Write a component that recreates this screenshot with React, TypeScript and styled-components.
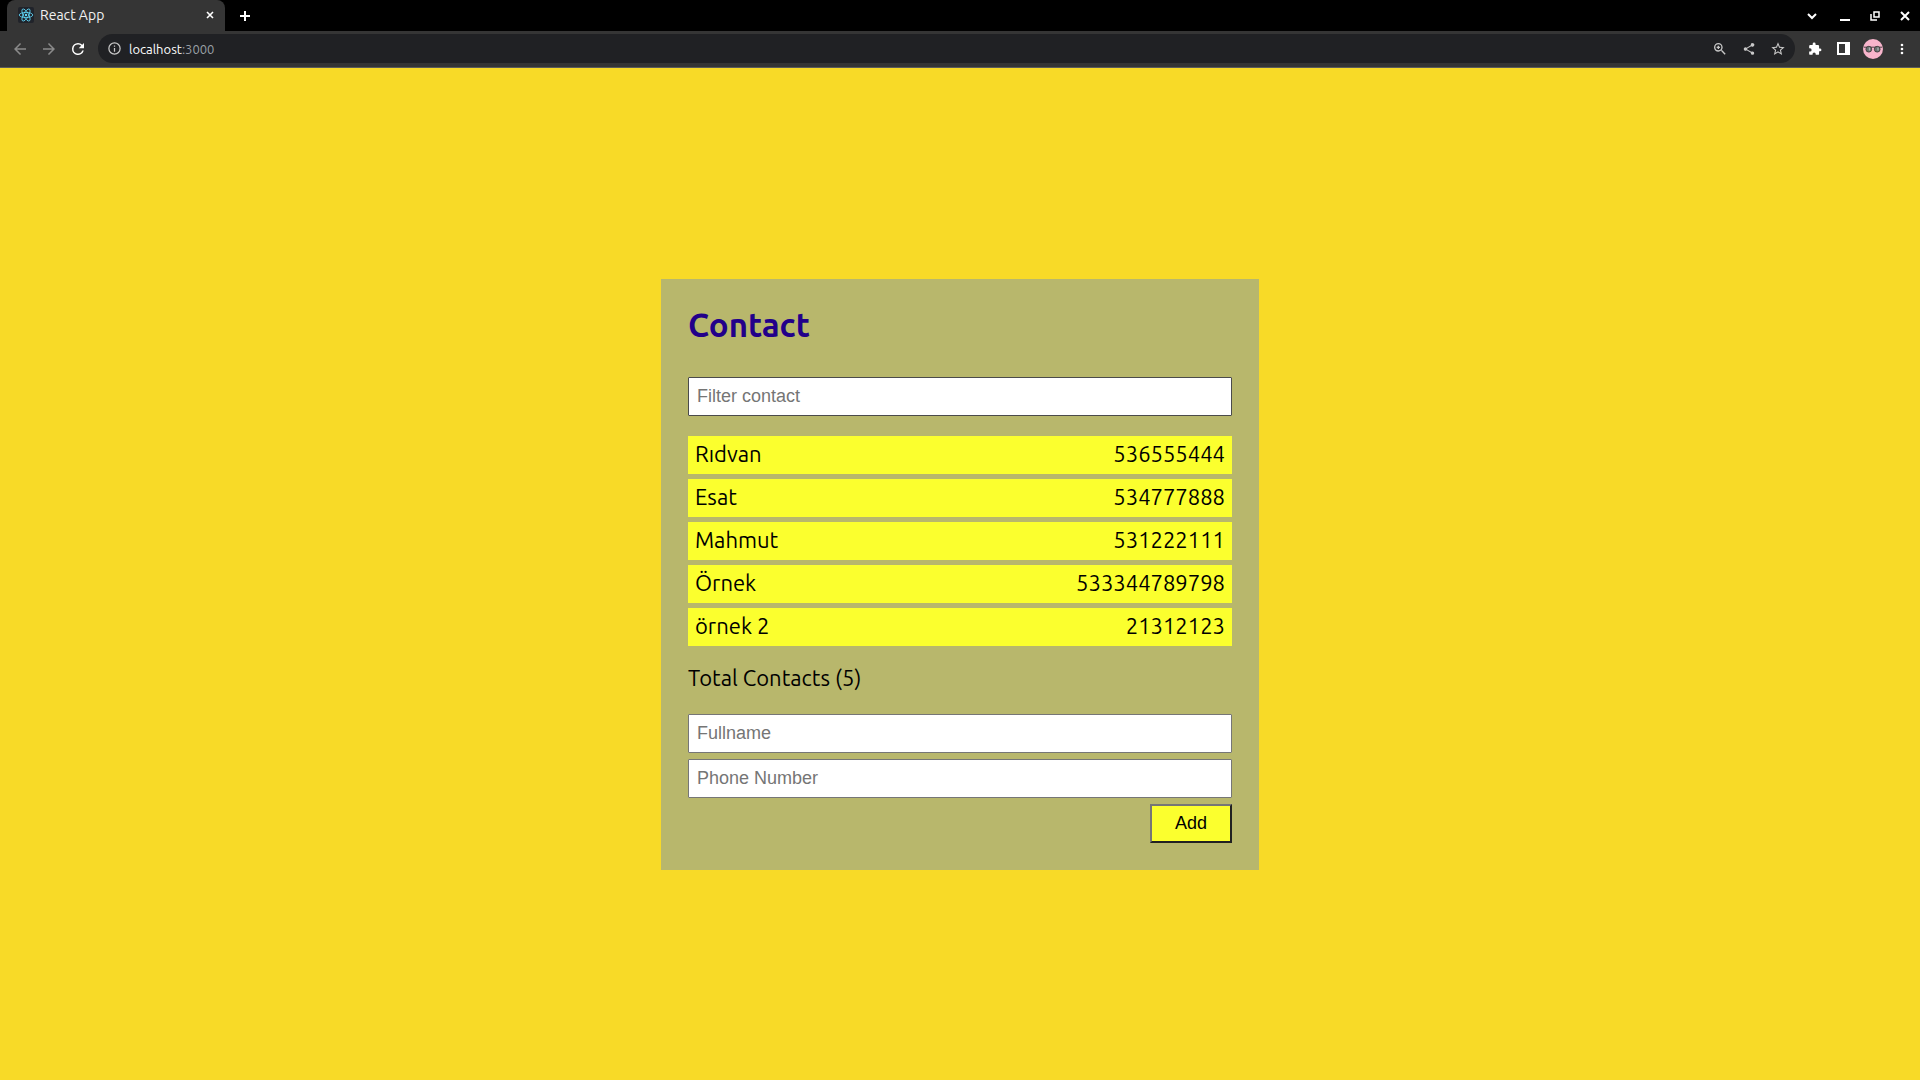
import React, { useState } from "react";
import styled, { createGlobalStyle } from "styled-components";

const uiFont = `Ubuntu, "Noto Sans", sans-serif`;
const controlFont = `"Liberation Sans", Arial, sans-serif`;

const GlobalStyle = createGlobalStyle`
  *, *::before, *::after { box-sizing: border-box; }
  body { margin: 0; background: #f8da27; font-family: ${uiFont}; }
`;

const Page = styled.div`
  min-height: 100vh;
  display: flex;
  flex-direction: column;
`;

const Chrome = styled.header`
  background: #353535;
  border-bottom: 1px solid #5c5c5a;
`;

const TabStrip = styled.div`
  display: flex;
  align-items: center;
  height: 31px;
  background: #000;
`;

const Tab = styled.div`
  display: flex;
  align-items: center;
  gap: 6px;
  width: 218px;
  height: 31px;
  margin-left: 7px;
  padding: 0 7px 1px 11px;
  border-radius: 8px 8px 0 0;
  background: #353535;
  color: #f1f1f1;
  font-size: 14px;
  line-height: 16px;
`;

const TabTitle = styled.span`
  flex: 1;
`;

const IconButton = styled.button<{ $size?: number }>`
  display: flex;
  align-items: center;
  justify-content: center;
  flex: none;
  width: ${(p) => p.$size ?? 29}px;
  height: ${(p) => p.$size ?? 29}px;
  padding: 0;
  border: 0;
  background: none;
  color: #fff;
  &:disabled { color: #8a8a8a; }
`;

const NewTab = styled(IconButton)`
  margin-left: 5px;
`;

const WindowControls = styled.div`
  display: flex;
  align-items: center;
  margin-left: auto;
`;

const Toolbar = styled.div`
  display: flex;
  align-items: center;
  height: 36px;
  padding: 0 4px 1px 5px;
`;

const AddressBar = styled.div`
  display: flex;
  align-items: center;
  flex: 1;
  height: 29px;
  margin: 0 5px 0 6px;
  padding: 0 3px 0 2px;
  border-radius: 15px;
  background: #202124;
  color: #bdc1c6;
`;

const Address = styled.a`
  flex: 1;
  color: #9aa0a6;
  font-size: 13px;
  line-height: 16px;
  text-decoration: none;
`;

const Host = styled.span`
  color: #fff;
`;

const AddressButton = styled(IconButton)`
  color: #c8c8c8;
`;

const Main = styled.main`
  flex: 1;
  display: flex;
  align-items: center;
  justify-content: center;
`;

const Card = styled.section`
  width: 598px;
  max-width: 100%;
  padding: 27px;
  background: #b8b76c;
  color: #000;
  font-size: 22px;
  line-height: 24px;
`;

const Title = styled.h1`
  margin: 0 0 34px;
  color: #22008a;
  font-size: 33px;
  font-weight: 700;
  line-height: 37px;
`;

const TextBox = styled.input<{ $dark?: boolean }>`
  display: block;
  width: 100%;
  height: 39px;
  padding: 0 8px;
  border: 1px solid ${(p) => (p.$dark ? "#4b4b4b" : "#767676")};
  border-radius: 1px;
  background: #fff;
  color: #000;
  font-family: ${controlFont};
  font-size: 18px;
  &::placeholder { color: #757575; opacity: 1; }
`;

const List = styled.ul`
  display: flex;
  flex-direction: column;
  gap: 5px;
  margin: 20px 0;
  padding: 0;
  list-style: none;
`;

const ListItem = styled.li`
  display: flex;
  justify-content: space-between;
  padding: 6px 7px 8px;
  background: #fbff2e;
`;

const Total = styled.p`
  margin: 0 0 24px;
`;

const Form = styled.form`
  display: flex;
  flex-direction: column;
  gap: 6px;
`;

const AddButton = styled.button`
  align-self: flex-end;
  width: 82px;
  height: 39px;
  padding: 0;
  border: 2px solid;
  border-color: #767676 #212121 #212121 #767676;
  background: #fbff2e;
  color: #000;
  font-family: ${controlFont};
  font-size: 18px;
`;

const Icon = ({ d, size = 18, box = 24 }: { d: string; size?: number; box?: number }) => (
  <svg width={size} height={size} viewBox={`0 0 ${box} ${box}`} fill="currentColor" aria-hidden="true">
    <path d={d} />
  </svg>
);

const Stroke = ({ d, size, width = 2 }: { d: string; size: number; width?: number }) => (
  <svg width={size} height={size} viewBox={`0 0 ${size} ${size}`} fill="none" stroke="currentColor" strokeWidth={width} aria-hidden="true">
    <path d={d} />
  </svg>
);

const ReactLogo = () => (
  <svg width="16" height="16" viewBox="0 0 16 16" aria-hidden="true">
    <rect width="16" height="16" rx="2" fill="#20232a" />
    <g fill="none" stroke="#61dafb" strokeWidth="0.8">
      <ellipse cx="8" cy="8" rx="6.8" ry="2.6" />
      <ellipse cx="8" cy="8" rx="6.8" ry="2.6" transform="rotate(60 8 8)" />
      <ellipse cx="8" cy="8" rx="6.8" ry="2.6" transform="rotate(120 8 8)" />
    </g>
    <circle cx="8" cy="8" r="1.2" fill="#61dafb" />
  </svg>
);

const Avatar = () => (
  <svg width="20" height="20" viewBox="0 0 20 20" aria-hidden="true">
    <circle cx="10" cy="10" r="10" fill="#f7b4cb" />
    <path d="M1 8.2h18" stroke="#4a4244" strokeWidth="1" />
    <circle cx="5.800" cy="10.200" r="2.900" fill="#68706f" stroke="#3b3436" strokeWidth="0.8" />
    <circle cx="14.200" cy="10.200" r="2.900" fill="#68706f" stroke="#3b3436" strokeWidth="0.8" />
    <path d="M6.500 8.500v3M15 8.500v3" stroke="#aab3b3" strokeWidth="1.300" />
  </svg>
);

const icons = {
  back: "M20 11H7.83l5.59-5.59L12 4l-8 8 8 8 1.41-1.41L7.83 13H20v-2z",
  forward: "M12 4l-1.41 1.41L16.17 11H4v2h12.17l-5.58 5.59L12 20l8-8z",
  reload: "M17.65 6.35A7.96 7.96 0 0 0 12 4a8 8 0 1 0 7.73 10h-2.08A6 6 0 1 1 12 6c1.66 0 3.14.69 4.22 1.78L13 11h7V4l-2.35 2.35z",
  info: "M11 7h2v2h-2zm0 4h2v6h-2zm1-9a10 10 0 1 0 0 20 10 10 0 0 0 0-20zm0 18a8 8 0 1 1 0-16 8 8 0 0 1 0 16z",
  zoom: "M15.5 14h-.79l-.28-.27A6.47 6.47 0 0 0 16 9.5 6.5 6.5 0 1 0 9.5 16c1.61 0 3.09-.59 4.23-1.57l.27.28v.79l5 4.99L20.49 19l-4.99-5zm-6 0a4.5 4.5 0 1 1 0-9 4.5 4.5 0 0 1 0 9zM10.500 7h-2v1.500H7v2h1.500V12h2v-1.500H12v-2h-1.500z",
  share: "M18 16.08c-.76 0-1.44.3-1.96.77L8.910 12.700c.05-.23.09-.46.09-.7s-.04-.47-.09-.7l7.050-4.110A3 3 0 1 0 15 5c0 .24.04.47.09.7L8.040 9.810a3 3 0 1 0 0 4.380l7.120 4.160A2.920 2.920 0 1 0 18 16.080z",
  star: "M22 9.240l-7.190-.62L12 2 9.190 8.630 2 9.240l5.460 4.730L5.820 21 12 17.270 18.180 21l-1.630-7.030L22 9.240zM12 15.400l-3.760 2.270 1-4.280-3.320-2.880 4.380-.38L12 6.100l1.710 4.040 4.380.38-3.320 2.880 1 4.280L12 15.400z",
  puzzle: "M20.500 11H19V7a2 2 0 0 0-2-2h-4V3.500a2.500 2.500 0 0 0-5 0V5H4a2 2 0 0 0-1.990 2v3.800H3.500a2.700 2.700 0 0 1 0 5.400H2V20a2 2 0 0 0 2 2h3.800v-1.500a2.700 2.700 0 0 1 5.400 0V22H17a2 2 0 0 0 2-2v-4h1.500a2.500 2.500 0 0 0 0-5z",
  more: "M12 8a2 2 0 1 0 0-4 2 2 0 0 0 0 4zm0 2a2 2 0 1 0 0 4 2 2 0 0 0 0-4zm0 6a2 2 0 1 0 0 4 2 2 0 0 0 0-4z",
};

const initialContacts = [
  { name: "Rıdvan", phone: "536555444" },
  { name: "Esat", phone: "534777888" },
  { name: "Mahmut", phone: "531222111" },
  { name: "Örnek", phone: "533344789798" },
  { name: "örnek 2", phone: "21312123" },
];

function BrowserChrome() {
  return (
    <Chrome>
      <TabStrip>
        <Tab>
          <ReactLogo />
          <TabTitle>React App</TabTitle>
          <IconButton $size={16} aria-label="Close tab"><Stroke size={8} width={1.6} d="M1 1l6 6M7 1l-6 6" /></IconButton>
        </Tab>
        <NewTab aria-label="New tab"><Stroke size={12} d="M6 1v10M1 6h10" /></NewTab>
        <WindowControls>
          <IconButton $size={36} aria-label="Search tabs"><Stroke size={10} d="M1 3l4 4 4-4" /></IconButton>
          <IconButton $size={30} aria-label="Minimize"><Stroke size={10} d="M0 9h10" /></IconButton>
          <IconButton $size={30} aria-label="Restore"><Stroke size={10} width={1.5} d="M4 1h5v5H4zM1 3v6h6" /></IconButton>
          <IconButton $size={30} aria-label="Close"><Stroke size={10} d="M1 1l8 8M9 1l-8 8" /></IconButton>
        </WindowControls>
      </TabStrip>
      <Toolbar>
        <IconButton disabled aria-label="Back"><Icon d={icons.back} /></IconButton>
        <IconButton disabled aria-label="Forward"><Icon d={icons.forward} /></IconButton>
        <IconButton aria-label="Reload"><Icon d={icons.reload} /></IconButton>
        <AddressBar>
          <AddressButton aria-label="Site information"><Icon size={15} d={icons.info} /></AddressButton>
          <Address href="#"><Host>localhost</Host>:3000</Address>
          <AddressButton aria-label="Zoom"><Icon size={16} d={icons.zoom} /></AddressButton>
          <AddressButton aria-label="Share"><Icon size={14} d={icons.share} /></AddressButton>
          <AddressButton aria-label="Bookmark"><Icon size={16} d={icons.star} /></AddressButton>
        </AddressBar>
        <IconButton aria-label="Extensions"><Icon size={14} d={icons.puzzle} /></IconButton>
        <IconButton aria-label="Side panel">
          <svg width="13" height="13" viewBox="0 0 13 13" fill="currentColor" aria-hidden="true">
            <path fillRule="evenodd" d="M0 0h13v13H0zM2 2v9h6V2z" />
          </svg>
        </IconButton>
        <IconButton aria-label="Profile"><Avatar /></IconButton>
        <IconButton aria-label="Menu"><Icon size={16} d={icons.more} /></IconButton>
      </Toolbar>
    </Chrome>
  );
}

export default function App() {
  const [contacts, setContacts] = useState(initialContacts);
  const [filter, setFilter] = useState("");
  const [form, setForm] = useState({ name: "", phone: "" });

  const shown = contacts.filter((c) =>
    (c.name + c.phone).toLowerCase().includes(filter.toLowerCase())
  );

  const onSubmit = (e: React.FormEvent) => {
    e.preventDefault();
    if (!form.name || !form.phone) return;
    setContacts([...contacts, form]);
    setForm({ name: "", phone: "" });
  };

  return (
    <Page>
      <GlobalStyle />
      <BrowserChrome />
      <Main>
        <Card>
          <Title>Contact</Title>
          <TextBox $dark aria-label="Filter contact" placeholder="Filter contact" value={filter} onChange={(e) => setFilter(e.target.value)} />
          <List>
            {shown.map((c, i) => (
              <ListItem key={i}>
                <span>{c.name}</span>
                <span>{c.phone}</span>
              </ListItem>
            ))}
          </List>
          <Total>Total Contacts ({contacts.length})</Total>
          <Form onSubmit={onSubmit}>
            <TextBox aria-label="Fullname" placeholder="Fullname" value={form.name} onChange={(e) => setForm({ ...form, name: e.target.value })} />
            <TextBox aria-label="Phone Number" placeholder="Phone Number" value={form.phone} onChange={(e) => setForm({ ...form, phone: e.target.value })} />
            <AddButton type="submit">Add</AddButton>
          </Form>
        </Card>
      </Main>
    </Page>
  );
}
